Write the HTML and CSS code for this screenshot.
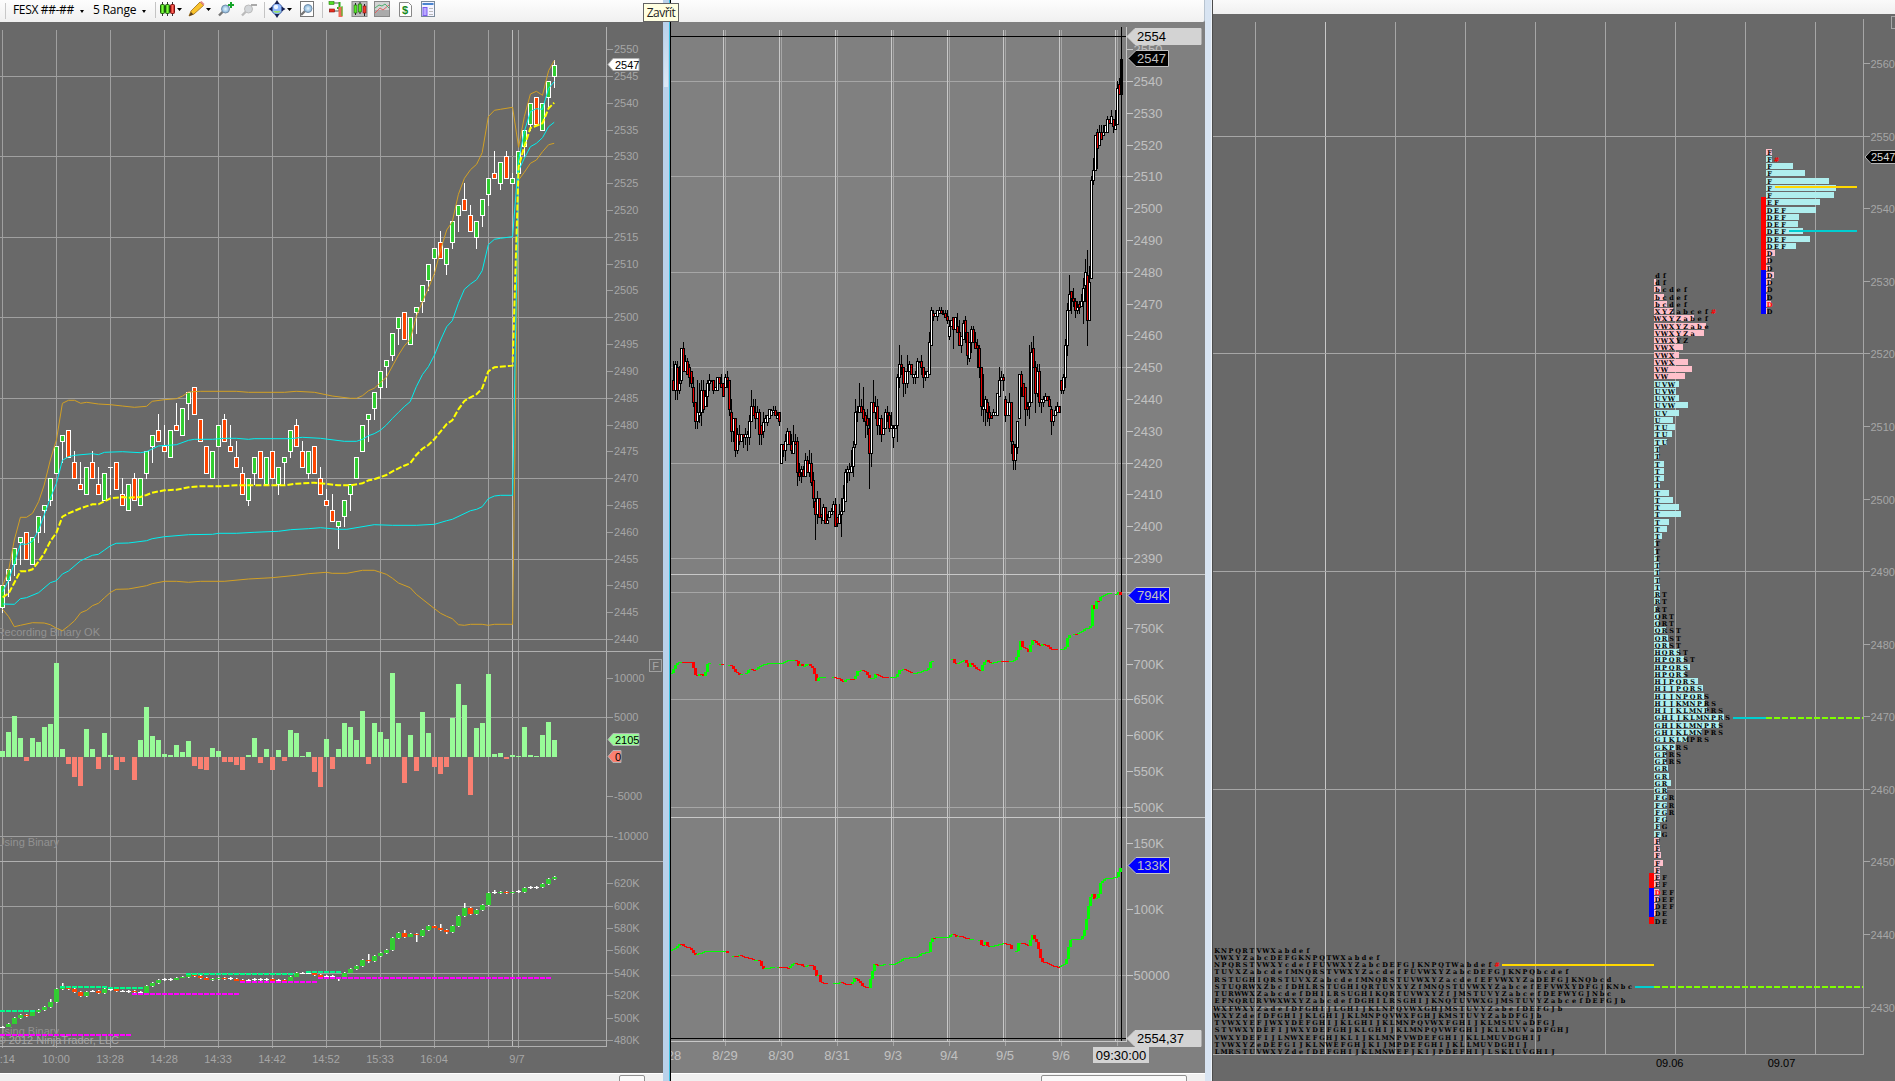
FILE: index.html
```html
<!DOCTYPE html>
<html lang="cs">
<head>
<meta charset="utf-8">
<title>FESX charts</title>
<link rel="stylesheet" href="styles.css">
</head>
<body>
<main class="workspace">
  <section class="panel panel-range">
    <header class="toolbar">
      <i class="sep sep-first"></i>
      <span class="pick pick-symbol">FESX ##-##</span><i class="caret"></i>
      <span class="pick pick-range">5 Range</span><i class="caret"></i>
      <svg class="icons" width="290" height="22" viewBox="152 0 290 22">
        <defs>
          <linearGradient id="g" x1="0" x2="1"><stop offset="0" stop-color="#2a9a10"/><stop offset=".5" stop-color="#7dff3a"/><stop offset="1" stop-color="#2a9a10"/></linearGradient>
          <linearGradient id="r" x1="0" x2="1"><stop offset="0" stop-color="#b01010"/><stop offset=".5" stop-color="#ff6a5a"/><stop offset="1" stop-color="#b01010"/></linearGradient>
          <radialGradient id="lens"><stop offset="0" stop-color="#e8f6ff"/><stop offset="1" stop-color="#7fb0d8"/></radialGradient>
        </defs>
        <path d="M155.500 2V18M264.500 2V18M322.500 2V18" stroke="#c4c4c4"/>
        <path d="M162.500 2V16M167.500 2V16M172.500 2V16" stroke="#333"/>
        <rect x="160.500" y="4.500" width="4" height="9" rx="1" fill="url(#g)" stroke="#1c5c0c"/>
        <rect x="165.500" y="4.500" width="4" height="9" rx="1" fill="url(#g)" stroke="#1c5c0c"/>
        <rect x="170.500" y="4.500" width="4" height="9" rx="1" fill="url(#r)" stroke="#7c1010"/>
        <path d="M177 8h5l-2.500 3zM206 8h5l-2.500 3zM287 8h5l-2.500 3z" fill="#000"/>
        <path d="M189 16l2-5 9-9 3.500 3.500-9.500 8.500z" fill="#f9c32c" stroke="#a06c14" stroke-width=".8"/>
        <path d="M200 2l3.500 3.500 1-1.500-3-3z" fill="#e68a8a"/><path d="M189 16l2-4 2.500 2.500z" fill="#5b4220"/>
        <path d="M219 15.500l4-4" stroke="#777" stroke-width="2.400"/><circle cx="225.500" cy="9" r="4" fill="url(#lens)" stroke="#7890a8"/>
        <path d="M228 5h6M231 2v6" stroke="#16a52a" stroke-width="2"/>
        <path d="M242 15.500l4-4" stroke="#bbb" stroke-width="2.400"/><circle cx="248.500" cy="9" r="4" fill="#d4d7da" stroke="#bbb"/><path d="M251 5h6" stroke="#aaa" stroke-width="2"/>
        <circle cx="277" cy="9" r="5.500" fill="#8fb8ff" stroke="#506aa8"/><path d="M273 11a5 5 0 0 0 8 0z" fill="#9be070"/><circle cx="276" cy="7" r="2.200" fill="#eef6ff"/>
        <path d="M277 0l2.500 4h-5zM277 18l2.500-4h-5zM268.500 9l4-2.500v5zM285.500 9l-4-2.500v5z" fill="#152050"/>
        <rect x="300.500" y="1.500" width="13" height="15" fill="#fff" stroke="#777"/><path d="M301 15l4-4" stroke="#777" stroke-width="2.400"/><circle cx="308" cy="8.500" r="4" fill="url(#lens)" stroke="#7890a8"/>
        <path d="M331 3h8M329 11h10" stroke="#555"/><rect x="329" y="1.500" width="5" height="3" fill="#4ee020" stroke="#2a7a10" stroke-width=".6"/><rect x="329.500" y="9" width="5" height="3" fill="#e83020" stroke="#801010" stroke-width=".6"/>
        <path d="M337 8h3M339.500 2v9" stroke="#2fae18" stroke-width="2"/><rect x="338.500" y="7" width="4" height="10" fill="#f06a5a"/><path d="M342 6v10" stroke="#31c81c"/>
        <rect x="352" y="1.500" width="15" height="15" fill="#bdbdbd" stroke="#888"/><path d="M355.500 3v12M360 2v12M364.500 4v12" stroke="#222"/><rect x="354" y="5" width="3" height="8" fill="#55e628" stroke="#1c5c0c" stroke-width=".6"/><rect x="358.500" y="4" width="3" height="8" fill="#55e628" stroke="#1c5c0c" stroke-width=".6"/><rect x="363" y="6" width="3" height="7" fill="#ef3b2a" stroke="#7c1010" stroke-width=".6"/>
        <rect x="374.500" y="1.500" width="15" height="15" fill="#d4d4d4" stroke="#888"/><rect x="375" y="10" width="14" height="6" fill="#aaa"/><path d="M375 13l5-5 3 2 6-5" fill="none" stroke="#e06060"/><path d="M375 8l4-3 3 1 3-2 4 4" fill="none" stroke="#4fb070"/>
        <path d="M399.500 2.500h9l3 3v11h-12z" fill="#fff" stroke="#888"/><text x="405" y="13.500" class="dollar">$</text>
        <rect x="421.500" y="1.500" width="13" height="15" fill="#f4f4ff" stroke="#7a8a9a"/><rect x="422.500" y="3" width="11" height="2" fill="#4a84d0"/><rect x="423" y="7.500" width="4" height="8" fill="#b9a8ff" stroke="#7a5cf0"/><path d="M429 8.500h4M429 11.500h4M429 14.500h4" stroke="#bbb"/>
      </svg>
      <div class="tooltip">Zavřít</div>
    </header>
    <svg class="chart" id="range" width="663" height="1051" viewBox="0 22 663 1051"></svg>
    <footer class="scroll scroll-left"><i class="thumb"></i></footer>
  </section>
  <div class="frame frame-left"></div>
  <section class="panel panel-daily">
    <header class="toolbar"></header>
    <svg class="chart" id="daily" width="534" height="1051" viewBox="671 22 534 1051"></svg>
    <footer class="scroll scroll-mid"><i class="thumb"></i></footer>
  </section>
  <div class="frame frame-right"></div>
  <section class="panel panel-profile">
    <header class="toolbar toolbar-thin"></header>
    <svg class="chart" id="profile" width="682" height="1067" viewBox="1213 14 682 1067"></svg>
  </section>
</main>
<script src="charts.js"></script>
</body>
</html>
```
FILE: styles.css
```css
* { box-sizing: border-box; }
body { margin: 0; overflow: hidden; background: #696969; font-family: "Liberation Sans", Arial, sans-serif; }
.workspace { display: flex; width: 1895px; height: 1081px; overflow: hidden; }
.panel { display: flex; flex-direction: column; }
.panel-range { width: 663px; background: #696969; }
.panel-daily { width: 534px; background: #808080; }
.panel-profile { width: 682px; background: #696969; }
.toolbar { position: relative; flex: none; height: 22px; display: flex; align-items: center; background: linear-gradient(#fdfdfd, #f0f0f0); font: 12px "Open Sans", "Noto Sans", sans-serif; color: #000; }
.toolbar-thin { height: 14px; background: linear-gradient(#fafafa, #f0f0f0); }
.panel-daily .toolbar { border-bottom-right-radius: 2px; border-right: 1px solid #b8c4d0; }
.sep { width: 1px; height: 16px; background: #c8c8c8; }
.sep-first { margin-left: 5px; }
.pick { white-space: nowrap; height: 18px; line-height: 16px; }
.pick-symbol { width: 61px; margin-left: 7px; letter-spacing: -0.35px; }
.pick-range { width: 43px; margin-left: 9px; letter-spacing: -0.2px; }
.caret { margin-left: 6px; border: 2.5px solid transparent; border-top: 3px solid #000; border-bottom: 0; }
.icons { margin-left: 6px; flex: none; }
.dollar { font: bold 11px "Liberation Sans", sans-serif; fill: #178a1c; text-anchor: middle; }
.tooltip { position: absolute; z-index: 2; left: 643px; top: 3px; width: 36px; height: 19px; border: 1px solid #646464; background: #ffffe1; font-size: 12px; line-height: 17px; text-align: center; letter-spacing: -0.5px; color: #222; }
.chart { display: block; flex: none; }
.frame { flex: none; width: 8px; }
.frame-left { background: linear-gradient(90deg, #b9d1ea 6px, #3cc0e0 6px, #3cc0e0 7px, #000 7px); position: relative; }
.frame-left::before { content: ""; position: absolute; left: 1px; top: 22px; width: 4px; height: 65px; background: linear-gradient(#b9d1ea, #dce8f5); }
.frame-right { background: linear-gradient(90deg, #d8e4f2 6px, #eef3f9 6px, #eef3f9 7px, #4c4c4c 7px); }
.scroll { flex: none; height: 8px; background: #f0f0f0; border-top: 1px solid #fff; display: flex; overflow: hidden; }
.thumb { height: 12px; margin-top: 1px; border: 1px solid #8f8f8f; border-radius: 2px; background: #fafafa; }
.scroll-left .thumb { margin-left: 619px; width: 26px; }
.scroll-mid .thumb { margin-left: 370px; width: 146px; }
.t11 { font-size: 11px; fill: #a6a6a6; }
.t13 { font-size: 13px; fill: #c0c0c0; }
.dim { font-size: 11px; fill: #929292; }
.black { fill: #000; }
.mid { text-anchor: middle; }
.end { text-anchor: end; }
.tpo { font: bold 6.5px "DejaVu Serif", serif; text-anchor: middle; fill: #000; }
.tpo-red { fill: #f00; }
```
FILE: charts.js
```js
const rect = (x, y, w, h, f) => `<rect x="${x}" y="${y}" width="${w}" height="${h}" fill="${f}"/>`;
const text = (x, y, s, c) => `<text x="${x}" y="${y}" class="${c}">${s}</text>`;
const H = (y, x1, x2, c) => rect(x1, y, x2 - x1, 1, c);
const V = (x, y1, y2, c) => rect(x, y1, 1, y2 - y1, c);
const tag = (x, y, w, h, n, fill, edge) =>
  `<path d="M${x} ${y + h / 2}L${x + n} ${y + .5}H${x + w}V${y + h - .5}H${x + n}Z" fill="${fill}" stroke="${edge}"/>`;

/* ---------- 5 Range chart ---------- */
function drawRange() {
  const G = '#a0a0a0', out = [];
  const py = p => Math.round(76 + (2545 - p) * 5.362);
  for (let k = 0; k < 10; k++) out.push(V(2 + 54 * k, 30, 1048, G));
  out.push(V(518, 30, 1048, G), V(512, 30, 1046, '#bebebe'));
  [2545, 2530, 2515, 2500, 2485, 2470, 2455, 2440].forEach(p => out.push(H(py(p), 0, 607, G)));
  [717, 836, 906, 973, 1040].forEach(y => out.push(H(y, 0, 607, G)));
  [651, 861].forEach(y => out.push(H(y, 0, 663, '#b0b0b0')));
  out.push(H(1046, 0, 607, '#b0b0b0'), V(606, 27, 1047, '#b0b0b0'));
  for (let p = 2550; p >= 2440; p -= 5) out.push(H(py(p), 607, 613, G), text(614, py(p) + 4, p, 't11'));
  [[678, '10000'], [717, '5000'], [796, '-5000'], [836, '-10000'], [883, '620K'], [906, '600K'], [928, '580K'], [950, '560K'],
   [973, '540K'], [995, '520K'], [1018, '500K'], [1040, '480K']].forEach(([y, s]) => out.push(H(y, 607, 613, G), text(614, y + 4, s, 't11')));
  ['10:00', '13:28', '14:28', '14:33', '14:42', '14:52', '15:33', '16:04'].forEach((s, i) => out.push(text(56 + 54 * i, 1063, s, 't11 mid')));
  out.push(text(15, 1063, '9:14', 't11 end'), text(517, 1063, '9/7', 't11 mid'));
  out.push(text(100, 636, 'Recording Binary OK', 'dim end'), text(59, 846, 'Using Binary', 'dim end'),
    text(59, 1035, 'Using Binary', 'dim end'), text(119, 1044, '© 2012 NinjaTrader, LLC', 't11 end'));
  out.push(`<rect x="649.5" y="659.5" width="12" height="12" fill="none" stroke="${G}"/>`, text(655.5, 669.5, 'F', 't11 mid'));

  /* volume delta: end of each bar, baseline 351 */
  const vol = [333,276,228,294,363,294,306,261,252,69,327,372,411,438,267,327,387,279,345,390,366,351,420,300,201,288,300,342,345,315,336,303,378,387,390,324,333,366,366,375,390,345,294,369,327,390,330,363,270,279,348,336,396,441,297,387,327,249,261,300,213,372,249,276,297,99,249,429,285,393,216,279,381,402,381,234,132,195,465,264,249,102,342,339,357,345,348,261,345,348,285,246,300];
  vol.forEach((v, i) => { const a = Math.round(Math.min(v, 351) / 3), b = Math.round(Math.max(v, 351) / 3);
    out.push(rect(6 * i, 640 + a, 5, b - a, v < 351 ? '#98fb98' : '#fa8072')); });

  /* colour, body top, body bottom, high, low as offsets from 2400 */
  const bars = `G50,46,50,45 G53,51,53,48 G57,54,57,52 G59,58,59,54 R60,55 G59,54 G63,60,63,58 G65,64,65,60 G70,66,70,65 G76,71 G78,77,78,73 R79,74 R73,70,75,70 R69,68,73,68 G72,67 R73,70,75,70 R69,67,72,67 G71,66 W72,72,72,67 R73,68 R67,65,70,65 G69,64 R70,66,71,66 G70,65 G75,71,75,70 G78,76,78,73 R79,77,82,77 R76,75,80,75 G79,74 R80,79,84,79 G83,78 G86,84,86,81 R87,82 R81,77 R76,71 G75,70 G80,76 R81,77,82,77 R76,75,80,75 R74,72,77,72 R71,67,72,67 G70,66,70,65 G74,71,74,69 R75,70 G74,69 R75,70 G72,69,72,67 G74,73,74,69 G79,75,79,74 R80,76,81,76 R75,72,77,72 G75,71,75,70 R76,71 R70,67,72,67 R66,65,68,65 R64,62,67,62 G62,61,62,57 G66,63,66,61 G69,67,69,64 G74,70 G80,75 G82,81,82,77 G86,83,86,81 G90,87,90,85 G92,91,92,87 G97,93,97,92 G100,98,100,95 R101,96 G100,95 G102,101,102,97 G106,103,106,101 G110,107,110,105 G113,111,113,108 R114,111,116,111 G113,110,113,108 G118,114,118,113 G121,119,121,116 R122,120,125,120 R119,116,121,116 G118,115,118,113 G122,119,122,117 G126,123,126,121 R127,126,131,126 G129,125,129,124 R130,126,131,126 G126,125,127,125 G131,127 G135,132,135,130 G140,136,140,135 R141,136 G140,135 G144,141,144,139 G147,145,148,143`.split(' ');
  bars.forEach((b, i) => {
    const [t, l, hi = t, lo = l] = b.slice(1).split(',').map(Number), x = 6 * i;
    const T = py(2400 + t), B = py(2400 + l);
    out.push(rect(x + 2, py(2400 + hi), 1, py(2400 + lo) - py(2400 + hi) + 1, '#fff'), rect(x, T, 5, B - T + 1, '#fff'));
    if (B > T) out.push(rect(x + 1, T + 1, 3, B - T - 1, b[0] === 'G' ? '#32cd32' : '#ff4500'));
  });

  const line = (s, c, w, dash) => { const pts = s.split(' ').map(q => { const [x, y] = q.split(','); return (x / 2.306).toFixed(1) + ',' + (340 + y / 3).toFixed(1); }).join(' ');
    out.push(`<polyline points="${pts}" fill="none" stroke="${c}" stroke-width="${w}" ${dash ? 'stroke-dasharray="6 2"' : ''}/>`); };
  const gold = '#d2a024', aqua = '#00f0f0';
  line('6,738 20,690 33,600 47,532 61,532 75,520 89,485 102,435 116,360 130,300 144,190 158,181 172,181 186,190 200,187 227,192 255,194 282,198 310,202 338,199 351,184 379,179 407,176 421,168 435,156 462,154 545,154 573,157 656,157 683,154 725,157 766,168 808,175 822,175 836,167 850,152 863,145 877,128 891,112 905,78 919,45 932,18 946,-2 960,-70 974,-115 988,-155 1002,-200 1016,-270 1030,-330 1043,-355 1057,-437 1071,-485 1085,-511 1099,-527 1112,-562 1126,-670 1140,-689 1154,-692 1182,-698 1196,-578 1209,-670 1223,-738 1237,-746 1251,-734 1265,-808 1278,-838', gold, 1);
  line('6,808 20,830 33,860 47,856 75,848 102,849 116,854 130,865 144,872 158,858 172,842 186,818 200,811 213,797 227,790 241,773 255,757 268,748 296,747 338,737 351,731 379,724 407,724 435,727 462,724 517,724 573,717 628,713 683,706 711,701 753,697 766,700 800,700 836,691 863,691 891,703 905,715 919,729 946,743 960,763 1002,806 1016,820 1030,829 1043,836 1057,854 1071,856 1085,853 1112,853 1126,856 1140,853 1182,853 1196,-480 1209,-503 1223,-530 1237,-540 1251,-565 1265,-586 1278,-590', gold, 1);
  line('6,755 20,720 33,670 47,612 61,613 75,604 89,570 102,525 116,475 130,430 144,361 158,350 172,346 213,341 227,344 241,337 282,335 324,338 338,335 365,318 407,314 435,301 448,298 490,298 517,295 545,295 573,298 586,296 670,296 697,292 739,295 794,304 822,304 836,298 850,287 863,281 877,271 891,255 905,235 919,217 932,200 946,185 960,140 974,104 988,80 1002,45 1016,0 1030,-40 1043,-58 1057,-110 1071,-152 1085,-168 1099,-181 1112,-208 1126,-286 1140,-302 1154,-305 1182,-310 1196,-540 1209,-625 1223,-685 1237,-694 1251,-692 1265,-755 1278,-775', aqua, 1);
  line('6,792 33,793 47,776 61,773 89,758 116,728 130,722 144,702 158,693 186,662 213,646 227,643 241,630 255,617 268,610 296,609 338,602 351,596 379,590 435,584 490,583 504,580 545,580 586,577 642,574 670,569 711,566 739,563 780,568 800,568 863,554 905,556 960,556 1002,553 1030,542 1043,538 1085,512 1099,508 1112,500 1126,476 1140,468 1154,466 1182,466 1196,-508 1209,-545 1223,-580 1237,-590 1251,-607 1265,-640 1278,-653', aqua, 1);
  line('6,772 20,760 33,728 47,694 61,694 75,688 89,665 102,640 116,604 130,578 144,530 158,520 186,505 213,493 227,493 241,484 255,475 282,471 296,473 324,471 338,465 351,458 379,451 407,449 435,442 462,439 504,439 545,436 656,436 683,431 725,428 753,432 780,436 808,436 836,430 850,421 863,418 891,405 905,394 919,385 932,377 946,370 960,345 974,326 988,315 1002,297 1030,252 1043,241 1057,208 1071,183 1085,172 1099,163 1112,145 1126,94 1140,82 1182,77 1196,-520 1209,-580 1223,-636 1237,-643 1251,-650 1265,-695 1278,-712', '#ff0', 2, true);

  /* cumulative delta candles */
  const cum = `W1160,1163 G1151,1160 G1134,1151 G1125,1134 R1125,1128 G1117,1127 G1111,1117 G1101,1111 G1086,1101,1077 G1047,1086 G1040,1047,1029 R1042,1047 R1047,1056 R1056,1068 G1056,1068 W1052,1055 R1053,1059 G1047,1059 W1047,1050 R1048,1053 W1052,1055 W1053,1056 R1053,1057 W1057,1060 G1038,1060 G1029,1038 G1020,1029 W1017,1020 W1017,1020 G1014,1019 G1010,1013 G1004,1011 R1004,1008 R1008,1014 R1014,1019 G1017,1020 G1014,1017 R1014,1017 W1015,1018 R1017,1022 R1020,1023 W1021,1024 W1018,1021 W1018,1021 W1017,1020 R1017,1022 W1019,1022 R1020,1024 G1010,1022 G1000,1010 W998,1001 W998,1001 R998,1006 R1005,1012 W1007,1010 W1008,1011 W1012,1015,1010,1022 G998,1010 G987,998 G978,987 G960,978 R960,963,942,969 G948,963 G939,948 G930,939 G894,930 G879,894 R879,891,870 G882,890 R882,886,879,906 G870,888 G858,870 R858,863 R864,870,852 R870,876,867,882 G858,876 G828,858 G804,828,789 R804,822 G810,822 G795,810 G759,795 W757,760,750,762 G756,759 R756,759 G756,759 W754,757 G744,756 W742,745 W742,745 G732,742 G717,732 G711,717`.split(' ');
  cum.forEach((b, i) => {
    const [t, l, hi = t - 3, lo = l + 2] = b.slice(1).split(',').map(Number);
    const T = Math.round(t / 3), B = Math.round(l / 3), h = Math.round(hi / 3), w = Math.round(lo / 3);
    out.push(rect(6 * i + 2, 640 + h, 1.5, w - h, '#fff'), rect(6 * i, 640 + T, 5, Math.max(1, B - T), { G: '#32cd32', R: '#ff4500', W: '#fff' }[b[0]]));
  });
  const dash = (a, b, y, c) => out.push(`<path d="M${Math.round(a / 2.306)} ${Math.round(640.2 + y / 3)}H${Math.round(b / 2.306)}" stroke="${c}" stroke-width="2" stroke-dasharray="5 1"/>`);
  [[0, 80, 1112], [138, 250, 1041], [250, 330, 1044], [430, 680, 1002], [706, 786, 996]].forEach(d => dash(...d, '#00fa8a'));
  [[0, 302, 1184], [304, 552, 1062], [554, 732, 1026], [734, 1272, 1014]].forEach(d => dash(...d, '#f0f'));

  out.push(tag(608, 58, 31, 13, 5, '#fff', '#b4b4b4'), text(615, 69, '2547', 't11 black'));
  out.push(tag(608, 733, 31, 13, 5, '#98fb98', '#b4b4b4'), text(615, 744, '2105', 't11 black'));
  out.push(tag(608, 750, 13, 13, 5, '#fa8072', '#b4b4b4'), text(615, 761, '0', 't11 black'));
  document.getElementById('range').innerHTML = out.join('');
}

/* ---------- daily chart ---------- */
function drawDaily() {
  const out = [], A = '#a6a6a6', L = '#c8c8c8';
  const py = p => Math.round(81 + (2540 - p) * 3.18);
  [2540, 2510, 2480, 2450, 2420, 2390].forEach(p => out.push(H(py(p), 671, 1126, A)));
  [592, 699, 807, 975].forEach(y => out.push(H(y, 671, 1126, A)));
  for (let k = 0; k < 8; k++) out.push(V(723 + 56 * k, 30, 1041, L), V(725 + 56 * k, 30, 1046, A));
  [574, 817].forEach(y => out.push(H(y, 671, 1205, L)));
  out.push(H(1041, 671, 1127, L), V(1126, 27, 1042, L), H(36, 671, 1126, '#000'), H(1038, 671, 1126, '#000'), V(1121, 27, 1041, '#000'));
  for (let p = 2550; p >= 2390; p -= 10) out.push(H(py(p), 1127, 1133, L), text(1133.5, py(p) + 4.5, p, 't13'));
  out.push(H(592, 1127, 1133, L));
  [[628, '750K'], [664, '700K'], [699, '650K'], [735, '600K'], [771, '550K'], [807, '500K'], [843, '150K'], [909, '100K'], [975, '50000']]
    .forEach(([y, s]) => out.push(H(y, 1127, 1133, L), text(1133.5, y + 4.5, s, 't13')));
  ['28', '8/29', '8/30', '8/31', '9/3', '9/4', '9/5', '9/6'].forEach((s, i) => out.push(text(i ? 669 + 56 * i : 674, 1060, s, 't13 mid')));

  const rows = `R241,270,183 W193,270,183,298 R203,270,183,298 W251,270,200,280 W146,241,146,251 R146,213,126 W184,213,165 R184,222,175 R203,232,193,260 R213,250,213,262 R262,308,232,318 R308,365,308,384 W337,365,241,384 W337,347,251,366 W270,337,241,376 R270,327,241,337 W290,318,270 W251,290,241,318 W241,250,222,270 W241,244 R241,270,241,280 W262,270 W232,270 R232,251 R251,262,222 R251,290 W232,262,222 R232,241,213,262 R241,327,241,347 R337,395,298,424 W356,395,356,424 R356,452,356,470 W404,452,385,460 R404,424,376,433 W404,424 R404,412,404,442 W404,412,385,433 W404,412,395,452 W365,412,347,433 W318,365,270 R318,347,298 R337,356,298,385 W337,356,318 R337,404,328,433 R375,404,375,433 W366,395,337,412 W356,366,347 W347,366,347,375 W328,356 W330,347,328 W330,337,318 R330,347,318 W347,356,337 R337,365,337,375 W433,490 R433,452,433,470 W424,452,404,480 W395,433,385 R395,433 R433,452,404,460 W424,460,375 R424,433,404 R424,518,412,557 R518,528,490,540 W509,518,500,547 R509,528,500 W480,528,460 R480,518,470 W490,518,450,528 R490,547,460,557 R540,595,518,623 R605,643,595,718 W595,643,575,670 R595,652 R643,652,643,670 W622,661,613 R622,670 W661,670,643 W634,652 W634,643,625 W613,634,603 R613,680,595 R652,670,652,680 W643,670,613 W634,643,595,709 W595,634,557 W518,605,509 W509,518,500,547 W509,518,490,540 W500,518,452 W442,500,424,528 W337,433,298,442 W335,338,318,365 W318,337,251 R318,337,298 R328,356,262,365 R347,365,337,412 R356,375,328,404 R385,460,356,566 W308,460,308,500 R308,337,241 W318,337,290,356 R318,375,298,404 W356,375,356,404 R356,404,347,424 W385,404 W337,385,328 R337,347,318,365 R347,385,337,395 W376,385,337 W385,412,376,442 W376,385 W232,375,222,424 W193,232,137,262 R193,203,165,222 R203,250,203,290 W213,250,213,280 W215,250,165,262 W193,213,184 R193,222 W222,232,222,250 W222,232,213,250 W184,232,175 W184,187 R184,203,165,222 R203,232,203,262 W222,232,213,240 W213,232 W127,222,98 W31,136,22 R40,50,31,62 W40,50 W31,50,31,60 W31,40,22 R31,40,22 R40,43,31 R40,52,31 R50,60,31,70 W80,108,60,118 W60,80 R52,88,52,146 W52,88 R80,98,40 R98,136,60 W108,136,108,156 W70,118,60 R60,98,50,127 R98,165,98,193 W127,175,127,184 W88,127,80,156 R88,127,80 R127,146,98 R136,146,118,203 R146,203,136,232 R203,320,203,347 W318,328,222,365 W298,328,290,376 R308,337,298,365 R337,356,318,376 R345,356 W337,347,328 W337,347 W280,347 W241,290,203 W232,241,213 R232,241,222,270 R298,347,290,365 W308,347 W308,347,280 R308,424,308,460 R433,480,424,509 W442,480,433,509 W365,442,365,460 W222,356 R222,262,213,290 R251,290 R262,327,262,376 R320,327,308,347 W308,318,137,356 W156,308,127 R146,203,108 R203,280,184,337 W213,280,193,290 R213,308,193,318 W298,308,298,337 W298,308,290,318 W290,300,280 R290,300 R298,318,290 R328,365,318,404 W347,365,347,375 W330,347,318 W318,337,308 R318,337 R241,270,241,280 W232,270,222,280 W136,232,118,262 W31,136,10,165 W-17,31,-75 R-26,-5,-26,41 R-5,5,-36,20 R5,31,-5,52 W21,31,5,40 R13,23,3,41 W3,19,-16 W-34,5,-64,70 W-82,-45,-123,5 R-73,61,-150,137 W-52,61,-102 W-359,-65,-370 W-388,-359,-425,-348 W-493,-390 R-502,-454,-512,-396 W-502,-464,-523 R-502,-482,-523 W-502,-493,-523 W-523,-502 W-542,-502,-552 R-542,-530 W-552,-530,-570 R-542,-521,-542,-502 W-523,-512,-570 W-635,-528,-656 R-647,-618,-665 K-722,-617`.split(' ');
  rows.forEach((b, i) => {
    const [t, l, hi = t, lo = l] = b.slice(1).split(',').map(v => Math.round(300 + (v - 1) / 3)), x = 672 + 2 * i;
    out.push(rect(x + 1, hi, 1, lo - hi + 1, '#000'), rect(x, t, 3, Math.max(2, l - t + 1), '#000'));
    if (b[0] !== 'K' && l - t > 1) out.push(rect(x + 1, t + 1, 1, l - t - 1, b[0] === 'W' ? '#fff' : '#e80000'));
  });

  const steps = s => s.split('|').forEach(seg => {
    const p = seg.trim().split(' ').map(q => q.split(',').map(Number)).map(([x, y]) => [660 + x / 2.8, 560 + y / 3]);
    let last = p[0][1], dir = -1;
    for (let x = p[0][0]; x <= p[p.length - 1][0] + .01; x += 2) {
      let k = 0; while (k < p.length - 2 && p[k + 1][0] < x) k++;
      const y = p[k][1] + (p[k + 1][1] - p[k][1]) * (x - p[k][0]) / (p[k + 1][0] - p[k][0]);
      if (Math.abs(y - last) > .05) dir = y > last ? 1 : -1;
      const a = Math.round(Math.min(y, last)), b = Math.round(Math.max(y, last));
      out.push(rect(Math.round(x) - 1, a, 3, Math.max(1, b - a), dir > 0 ? '#f00' : '#0f0'));
      last = y;
    }
  });
  steps('32,338 42,318 48,310 56,306 90,307 98,345 104,350 110,342 120,343 124,353 130,320 134,310 140,310|168,312 176,313|194,314 200,318 210,335 222,345 232,342|242,339 250,325 262,333 274,322 290,313 310,308 345,308 358,300 380,300 388,318 394,312 400,321 408,313 418,313 430,328 436,365 446,352 462,352|484,352 494,353 504,358 510,368 518,358 530,357 542,358 550,335 560,330 572,333 584,355 596,353 602,340 612,348 622,352 640,352|648,352 662,352 668,330 684,328 690,333 704,338|712,338 722,338 740,330 750,328 756,308 766,298|818,298 824,310 836,309 854,300 864,325 868,310 876,318 888,328 896,335 904,310 912,300 922,310 950,303 976,304 990,303 1000,285 1008,243 1014,260 1026,268 1032,278 1036,255 1042,240 1052,246 1062,260 1070,252 1080,255 1094,267 1110,268|1122,268 1132,268 1140,228 1146,222|1158,222 1164,223 1176,215 1186,208 1196,202 1202,208 1208,132 1213,155 1218,120 1224,128 1228,112 1240,105 1254,100 1262,100|1278,102 1284,97 1292,107');
  steps('32,1170 48,1160 56,1150 70,1160 82,1162 98,1184 110,1180 126,1174 184,1174 194,1187|204,1187 214,1190 220,1184 230,1190 250,1195 260,1200 275,1198 286,1226 296,1224 316,1221|330,1221 350,1222 358,1225 372,1210 390,1212 406,1222 412,1215 428,1218 436,1250 440,1236 448,1268 466,1270|488,1270 506,1267 516,1273 536,1273 542,1254 554,1260 566,1278 584,1283 590,1250 600,1212 610,1215 628,1213|644,1213 662,1210 680,1195 700,1192 718,1192 730,1180 752,1175 758,1133 768,1134|774,1132 808,1130 818,1122 830,1130 838,1125 850,1132 864,1137 880,1135|892,1140 900,1162 908,1146 916,1160 930,1158 960,1150 976,1155 984,1172|998,1172 1004,1147 1018,1150 1032,1157 1042,1125 1056,1150 1068,1206 1078,1207 1090,1215 1110,1220 1120,1220 1136,1210 1144,1160 1150,1137|1154,1136 1180,1136 1190,1100 1200,1030 1208,993 1214,1018 1226,1010 1230,972 1240,960 1250,954 1278,952 1282,937 1292,918');

  out.push(tag(1127, 28, 74, 17, 8, '#d3d3d3', '#d3d3d3'), text(1137, 41, '2554', 't13 black'));
  out.push(tag(1128, 50, 40.5, 17, 8, '#000', '#c0c0c0'), text(1137, 63, '2547', 't13'));
  out.push(tag(1128, 587, 41.5, 17, 8, '#00f', '#c8c8c8'), text(1137, 600, '794K', 't13'));
  out.push(tag(1128, 857, 41.5, 17, 8, '#00f', '#c8c8c8'), text(1137, 870, '133K', 't13'));
  out.push(tag(1127, 1030, 74, 17, 8, '#d3d3d3', '#d3d3d3'), text(1137, 1043, '2554,37', 't13 black'));
  out.push(rect(1093, 1047, 56, 16, '#d3d3d3'), text(1121, 1060, '09:30:00', 't13 black mid'));
  document.getElementById('daily').innerHTML = out.join('');
}

/* ---------- market profile ---------- */
function drawProfile() {
  const out = [], G = '#a6a6a6';
  const py = p => 136.3 + (2550 - p) * 7.256;
  for (let k = 0; k < 9; k++) out.push(V(1255 + 70 * k, 22, 1054, k === 1 ? '#c8c8c8' : G));
  for (let p = 2550; p >= 2430; p -= 30) out.push(H(Math.floor(py(p)), 1213, 1863, G));
  out.push(V(1863, 19, 1055, G), H(1054, 1213, 1864, G));
  for (let p = 2560; p >= 2430; p -= 10) out.push(H(Math.floor(py(p)), 1864, 1870, G), text(1870.5, Math.floor(py(p)) + 5, p, 't11'));
  out.push(`<rect x="1891.5" y="16.5" width="11" height="12" fill="none" stroke="${G}"/>`);
  out.push(text(1669.7, 1067, '09.06', 't11 black mid'), text(1781.5, 1067, '09.07', 't11 black mid'));

  const letters = (x, p, s) => {
    [...s].forEach((c, i) => { const red = c === '#' || c === '!'; out.push(text(x + 7 * i, Math.round(py(p) + .7) + 2.5, c === '!' ? 'D' : c, red ? 'tpo tpo-red' : 'tpo')); });
  };
  const pink = '#ffc0cb', teal = '#afeeee';
  const profile = (x, top, rows, tealFrom, tealTo) => rows.forEach(([w, s], i) => {
    const p = top - i;
    if (w) out.push(rect(x, Math.round(py(p) + .7) - 3, w, 6, p <= tealFrom && p >= tealTo ? teal : pink));
    letters(x + 3.5, p, s);
  });
  const parse = s => s.split(' ').map(q => { const [w, t] = q.split(':'); return [w / 3, t]; });
  profile(1654, 2531, parse('0:df 6:df 21:bcdef 30:bcdef 39:bcdef 57:XYZabcef# 120:WXYZabef 156:VWXYZabe 150:VWXYZa 69:VWXYZ 87:VWX 75:VWX 102:VWX 114:VW 93:VW 75:UVW 66:UVW 75:UVW 102:UVW 75:UV 57:U 63:TU 54:TU 39:TU 15:T 15:T 30:T 30:T 30:T 18:T 45:T 57:T 75:T 81:T 45:T 39:T 24:T 6:T 6:T 9:T 15:T 15:T 15:T 18:T 18:RT 18:RT 9:RT 15:QRT 15:QRT 36:QRST 42:QRST 45:QRST 75:HQRST 90:HPQRST 108:HPQRS 93:HPQRS 132:HJPQRS 147:HIJPQRS 150:HIJNPQRS 153:HIJKMNPRS 159:HIJKLMNPRS 210:GHIJKLMNPRS 195:GHIKLMNPRS 144:GHIKLMNPRS 99:GIKLMPRS 63:GKPRS 36:GPRS 36:GPRS 42:GR 45:GR 51:GR 39:GR 39:FGR 39:FGR 39:FGR 36:FG 18:FG 21:FG 15:F 18:F 21:F 27:F 18:F 18:EF 15:EF 15:!EF 15:DEF 9:DEF 6:DE 0:DE'), 2516, 2454);
  profile(1766, 2548, parse('18:F 18:F# 81:F 117:F 189:F 210:F 204:F 162:EF 150:DEF 99:DEF 96:DEF 111:DEF 132:DEF 90:DEF 27:D 12:D 12:D 24:D 15:D 6:D 3:D 15:! 3:D'), 2547, 2535);

  ['KNPQRTVWXabdef', 'VWXYZabcDEFGKNPQTWXabdef', 'NPQRSTVWXYcdefFUVWXYZabcDEFGJKNPQTWabdef#',
   'TUVXZabcdefMNQRSTVWXYZacdefFUVWXYZabcDEFGJKNPQbcdef', 'RSTUGHIQRSTUVXZabcdefMNQRSTUVWXYZacdefEFVWXYZaDEFGJKNQbcd',
   'STUQRWXZbcfDHLRSTUGHIQRTUVXYZfMNQSTUVWXYZabcefEFVWXYDFGJKNbc', 'TURWWXZabcdefDHILRSUGHIKQRTUVWXYZfJMSTUVYZabcefDEFWYGJNbc',
   'EFNQRURVWXWXYZabcdefDGHILRSGHIJKNQTUVWXGJMSTUVYZabcefDEFGJb', 'WXFWXYZadefDFGHIJLGHIJKLNPQVWXGHJMSTUVYZabefDEFGJb',
   'WXYZdefDFGHIJKLGHIJKLMNPQVWXFGHJKMSTUVYZabDFGJb', 'TVWXYEFJWXYDEFGHIJKLGHIJKLMNPQVWXFGHIJKLMSUVaDFGJ',
   'STVWXYDEFIJWXYDEFGHJKLGHIJKLMNPQVWFGHIJKLLMUVaDFGHJ', 'VWXYDEFIJLNWXEFGHJKLIJKLMNPVWDEFGHIJKLLMUVDGHIJ',
   'TVWXYZeDEFGIJKLNWEFGHJKIJMPDEFGHIJKLLMUVDGHIJ', 'LMRSTUVWXYZdefDEFGHIJKLMNWEFJKIJPDEFHIJLSKLUVGHIJ']
    .forEach((s, i) => letters(1217, 2438 - i, s));

  out.push(rect(1649, 873, 5, 15, '#f00'), rect(1649, 888, 5, 29, '#00f'), rect(1649, 917, 5, 7, '#f00'),
    rect(1761, 197, 5, 73, '#f00'), rect(1761, 270, 5, 44, '#00f'));
  out.push(rect(1775, 186, 82, 2, '#ffd700'), rect(1789, 230, 68, 2, '#00ced1'), rect(1502, 964, 152, 2, '#ffd700'),
    rect(1733, 717, 33, 2, '#00ced1'), rect(1635, 986, 19, 2, '#00ced1'));
  out.push('<path d="M1766 718H1863M1654 987H1863" stroke="#7fff00" stroke-width="2" stroke-dasharray="6 2"/>');
  out.push(tag(1865, 150, 40, 14, 6, '#000', '#b4b4b4'), `<text x="1871" y="161" font-size="11" fill="#d8d8d8">2547</text>`);
  document.getElementById('profile').innerHTML = out.join('');
}

drawRange();
drawDaily();
drawProfile();
```
